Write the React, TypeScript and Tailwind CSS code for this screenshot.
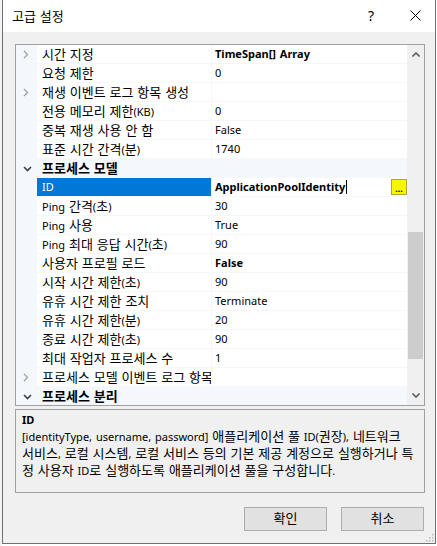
import React from "react";

type Row = {
  cat?: boolean;
  name: string;
  value?: string;
  bold?: boolean;
  expander?: boolean;
  selected?: boolean;
};

const rows: Row[] = [
  { name: "시간 지정", value: "TimeSpan[] Array", bold: true, expander: true },
  { name: "요청 제한", value: "0" },
  { name: "재생 이벤트 로그 항목 생성", value: "", expander: true },
  { name: "전용 메모리 제한(KB)", value: "0" },
  { name: "중복 재생 사용 안 함", value: "False" },
  { name: "표준 시간 간격(분)", value: "1740" },
  { cat: true, name: "프로세스 모델" },
  { name: "ID", value: "ApplicationPoolIdentity", bold: true, selected: true },
  { name: "Ping 간격(초)", value: "30" },
  { name: "Ping 사용", value: "True" },
  { name: "Ping 최대 응답 시간(초)", value: "90" },
  { name: "사용자 프로필 로드", value: "False", bold: true },
  { name: "시작 시간 제한(초)", value: "90" },
  { name: "유휴 시간 제한 조치", value: "Terminate" },
  { name: "유휴 시간 제한(분)", value: "20" },
  { name: "종료 시간 제한(초)", value: "90" },
  { name: "최대 작업자 프로세스 수", value: "1" },
  { name: "프로세스 모델 이벤트 로그 항목", value: "", expander: true },
  { cat: true, name: "프로세스 분리" },
];

// Hangul runs are set a little larger so their advance matches Malgun Gothic.
function K({ s }: { s: string }) {
  const parts = s.split(/([\uAC00-\uD7A3]+)/);
  return (
    <>
      {parts.map((p, i) =>
        /[\uAC00-\uD7A3]/.test(p) ? (
          <span key={i} className="text-[13px]">
            {p}
          </span>
        ) : (
          <React.Fragment key={i}>{p}</React.Fragment>
        )
      )}
    </>
  );
}

function ChevronRight() {
  return (
    <svg width="6" height="9" viewBox="0 0 6 9">
      <polyline points="1,1 4.5,4.5 1,8" fill="none" stroke="#a6a6a6" strokeWidth="1.4" />
    </svg>
  );
}

function ChevronDown() {
  return (
    <svg width="9" height="6" viewBox="0 0 9 6">
      <polyline points="1,1 4.5,4.5 8,1" fill="none" stroke="#404040" strokeWidth="1.6" />
    </svg>
  );
}

function ScrollUp() {
  return (
    <svg width="8" height="5" viewBox="0 0 8 5">
      <polyline points="0.5,4.5 4,1 7.5,4.5" fill="none" stroke="#606060" strokeWidth="1.6" />
    </svg>
  );
}

function ScrollDown() {
  return (
    <svg width="8" height="5" viewBox="0 0 8 5">
      <polyline points="0.5,0.5 4,4 7.5,0.5" fill="none" stroke="#606060" strokeWidth="1.6" />
    </svg>
  );
}

function GridRow({ r }: { r: Row }) {
  if (r.cat) {
    return (
      <div className="flex h-[19px] shrink-0 bg-[#f4f7fc]">
        <div className="flex w-[21px] items-center justify-center pl-[1px] pt-[1px]">
          <ChevronDown />
        </div>
        <div className="pl-[5px] text-[11px] font-bold leading-[18px] text-black whitespace-nowrap">
          <K s={r.name} />
        </div>
      </div>
    );
  }
  return (
    <div className="flex h-[19px] shrink-0">
      <div className="flex w-[21px] items-center justify-center bg-[#f4f7fc] pr-[1px]">
        {r.expander ? <ChevronRight /> : null}
      </div>
      <div
        className={
          r.selected
            ? "w-[174px] overflow-hidden whitespace-nowrap border-b border-[#f4f7fc] bg-[#0078d7] pl-[5px] text-[11px] leading-[18px] text-white"
            : "w-[174px] overflow-hidden whitespace-nowrap border-b border-[#f4f7fc] bg-white pl-[5px] text-[11px] leading-[18px] text-black"
        }
      >
        <K s={r.name} />
      </div>
      <div className="w-px bg-[#f4f7fc]" />
      <div className="flex flex-1 items-start overflow-hidden whitespace-nowrap border-b border-[#f4f7fc] bg-white">
        <div
          className={
            r.bold
              ? "flex-1 pl-[3px] text-[11px] font-bold leading-[18px] text-black"
              : "flex-1 pl-[3px] text-[11px] leading-[18px] text-black"
          }
        >
          {r.value}
          {r.selected ? (
            <span className="ml-px inline-block h-[14px] w-px bg-black align-[-3px]" />
          ) : null}
        </div>
        {r.selected ? (
          <div className="mt-[1px] flex h-[16px] w-[16px] items-end justify-center border border-[#a8a83a] bg-[#f7f700] pb-[1px]">
            <span className="text-[9px] font-bold leading-[8px] text-black">...</span>
          </div>
        ) : null}
      </div>
    </div>
  );
}

export default function App() {
  return (
    <div className="flex h-[546px] w-[437px] bg-white font-['Noto_Sans','Noto_Sans_CJK_KR',sans-serif] [word-spacing:1px]">
      <div className="w-[2px] bg-[#f3f3f3]" />
      <div className="relative flex h-[544px] w-[434px] flex-col border-x border-b border-[#707070] bg-[#f0f0f0]">
        {/* Title bar */}
        <div className="flex h-[32px] shrink-0 items-center bg-white">
          <div className="pl-[9px] text-[11px] leading-[16px] text-black">
            <K s="고급 설정" />
          </div>
          <div className="ml-auto flex h-full w-[48px] items-center justify-center text-[14px] leading-none text-black">
            ?
          </div>
          <div className="flex h-full w-[40px] items-center justify-center pb-[1px]">
            <svg width="11" height="11" viewBox="0 0 11 11">
              <line x1="0.5" y1="0.5" x2="10.5" y2="10.5" stroke="#000" strokeWidth="1" />
              <line x1="10.5" y1="0.5" x2="0.5" y2="10.5" stroke="#000" strokeWidth="1" />
            </svg>
          </div>
        </div>

        {/* Body */}
        <div className="flex flex-1 flex-col pl-[12px] pr-[10px] pt-[12px]">
          {/* Property grid */}
          <div className="flex h-[362px] w-[410px] shrink-0 border border-[#a0a0a0] bg-white">
            <div className="flex w-[391px] flex-col overflow-hidden">
              {rows.map((r, i) => (
                <GridRow key={i} r={r} />
              ))}
            </div>
            <div className="flex w-[17px] flex-col bg-[#f0f0f0]">
              <div className="flex h-[17px] shrink-0 items-center justify-center pt-[1px]">
                <ScrollUp />
              </div>
              <div className="h-[170px] shrink-0" />
              <div className="mx-[1px] h-[127px] shrink-0 bg-[#cdcdcd]" />
              <div className="flex-1" />
              <div className="flex h-[17px] shrink-0 items-center justify-center pb-[2px]">
                <ScrollDown />
              </div>
            </div>
          </div>

          {/* Description */}
          <div className="mt-[3px] h-[84px] w-[410px] shrink-0 border border-[#a0a0a0] bg-[#f0f0f0] pl-[6px] pt-[1px] text-[11px] text-black">
            <div className="font-bold leading-[17px]">ID</div>
            <div className="whitespace-nowrap leading-[16px]">
              <K s="[identityType, username, password] 애플리케이션 풀 ID(권장), 네트워크" />
            </div>
            <div className="whitespace-nowrap leading-[16px]">
              <K s="서비스, 로컬 시스템, 로컬 서비스 등의 기본 제공 계정으로 실행하거나 특" />
            </div>
            <div className="whitespace-nowrap leading-[16px]">
              <K s="정 사용자 ID로 실행하도록 애플리케이션 풀을 구성합니다." />
            </div>
          </div>

          {/* Buttons */}
          <div className="mt-[14px] flex justify-end gap-[14px] pr-px">
            <div className="flex h-[24px] w-[83px] items-center justify-center border border-[#adadad] bg-[#e1e1e1] text-[11px] text-black">
              <K s="확인" />
            </div>
            <div className="flex h-[24px] w-[83px] items-center justify-center border border-[#adadad] bg-[#e1e1e1] text-[11px] text-black">
              <K s="취소" />
            </div>
          </div>
        </div>

        {/* Resize grip */}
        <div className="absolute bottom-[1px] right-[1px]">
          <svg width="9" height="9" viewBox="0 0 9 9">
            <rect x="7" y="1" width="1.5" height="1.5" fill="#b8b8b8" />
            <rect x="7" y="4" width="1.5" height="1.5" fill="#b8b8b8" />
            <rect x="4" y="4" width="1.5" height="1.5" fill="#b8b8b8" />
            <rect x="7" y="7" width="1.5" height="1.5" fill="#b8b8b8" />
            <rect x="4" y="7" width="1.5" height="1.5" fill="#b8b8b8" />
            <rect x="1" y="7" width="1.5" height="1.5" fill="#b8b8b8" />
          </svg>
        </div>
      </div>
    </div>
  );
}
